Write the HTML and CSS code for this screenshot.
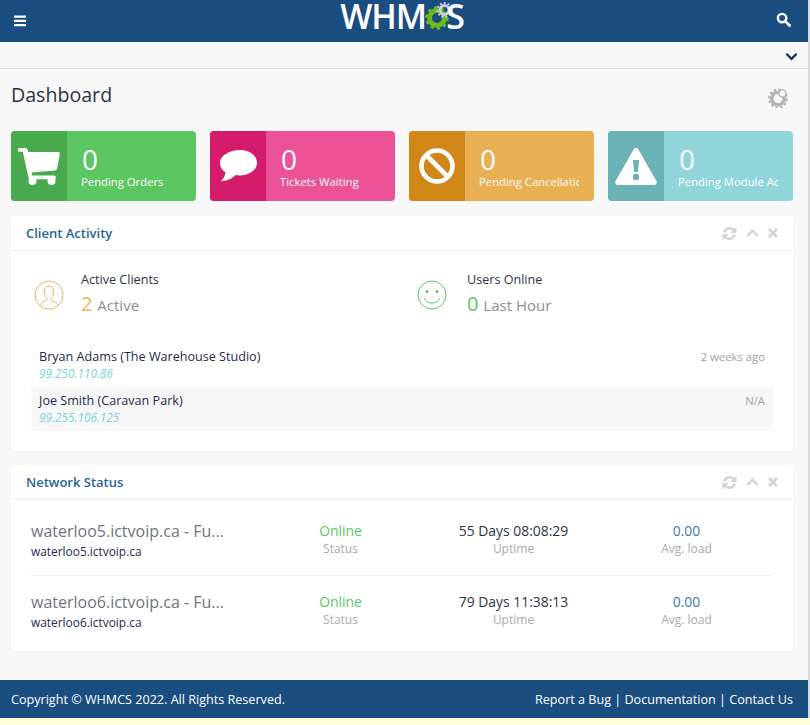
FILE: index.html
```html
<!DOCTYPE html>
<html lang="en">
<head>
    <meta charset="UTF-8">
    <title>Dashboard</title>
    <link rel="stylesheet" href="styles.css">
</head>
<body>
    <div class="page">
        <header class="topbar">
            <svg class="icon-menu" viewBox="0 0 14 12"><path d="M0 0h13v2.4H0zM0 4.6h13V7H0zM0 9.2h13v2.4H0z" fill="#fff"/></svg>
            <div class="logo">
                <span class="logo-text">WHM</span>
                <svg class="logo-gears" viewBox="0 0 32 30">
                    <g fill="none" stroke="#6cb81e">
                        <circle cx="12" cy="17" r="7.5" stroke-width="5"/>
                        <circle cx="12" cy="17" r="10.5" stroke-width="2.6" stroke-dasharray="3.2 3.4"/>
                    </g>
                    <g fill="none" stroke="#c9cfd4">
                        <circle cx="19.5" cy="9" r="4.5" stroke-width="3"/>
                        <circle cx="19.5" cy="9" r="7" stroke-width="1.8" stroke-dasharray="2 2"/>
                    </g>
                </svg>
                <span class="logo-text logo-s">S</span>
            </div>
            <svg class="icon-search" viewBox="0 0 16 16"><circle cx="6.5" cy="6.5" r="4.5" fill="none" stroke="#fff" stroke-width="2.6"/><path d="M10 10l4.5 4.5" stroke="#fff" stroke-width="3" stroke-linecap="round"/></svg>
        </header>

        <div class="subbar">
            <svg class="icon-down" viewBox="0 0 14 9"><path d="M1.500 1.500L7 7l5.500-5.500" fill="none" stroke="#1c2a5a" stroke-width="2.400"/></svg>
        </div>

        <main class="content">
            <div class="title-row">
                <h1>Dashboard</h1>
                <svg class="icon-cog" viewBox="0 0 20 20">
                    <circle cx="10" cy="10.5" r="6.3" fill="none" stroke="#b5b5b5" stroke-width="3.6"/>
                    <circle cx="10" cy="10.5" r="9" fill="none" stroke="#b5b5b5" stroke-width="2" stroke-dasharray="2.6 2.1"/>
                    <circle cx="14.5" cy="5.5" r="3" fill="#f8f8f8"/>
                    <circle cx="14.5" cy="5.5" r="3.6" fill="none" stroke="#b5b5b5" stroke-width="1.4"/>
                </svg>
            </div>

            <div class="stats">
                <a class="stat stat-green">
                    <span class="stat-icon">
                        <svg class="glyph-cart" viewBox="0 0 42 37"><path d="M1.500 0h6c1 0 1.700.7 2 1.600L10.300 4H40c1.200 0 2 1 1.800 2.200l-2.700 14.500c-.2 1-1 1.600-2 1.700L13.500 24.500l.6 3H36c1.200 0 2 .9 2 1.900s-.8 1.900-2 1.900H12.500c-1 0-1.700-.6-2-1.500L4.800 3.800H1.500C.6 3.800 0 3 0 1.900S.6 0 1.500 0z" fill="#fff"/><circle cx="14.500" cy="33" r="4" fill="#fff"/><circle cx="33.500" cy="33" r="4" fill="#fff"/></svg>
                    </span>
                    <span class="stat-body"><span class="stat-num">0</span><span class="stat-label">Pending Orders</span></span>
                </a>
                <a class="stat stat-pink">
                    <span class="stat-icon">
                        <svg class="glyph-chat" viewBox="0 0 37 32"><path d="M20 0c9.400 0 17 5.500 17 12.700S29.400 25.500 20 25.500c-1.500 0-3-.1-4.400-.4C12.500 28.500 7.500 31 .5 31.500 3.500 29 5.200 25.800 5.500 22.300 1.800 20 0 16.600 0 12.700 0 5.500 10.600 0 20 0z" fill="#fff"/></svg>
                    </span>
                    <span class="stat-body"><span class="stat-num">0</span><span class="stat-label">Tickets Waiting</span></span>
                </a>
                <a class="stat stat-orange">
                    <span class="stat-icon">
                        <svg class="glyph-ban" viewBox="0 0 36 36"><circle cx="18" cy="18" r="15.500" fill="none" stroke="#fff" stroke-width="4.600"/><path d="M7 7l22 22" stroke="#fff" stroke-width="4.600"/></svg>
                    </span>
                    <span class="stat-body"><span class="stat-num">0</span><span class="stat-label">Pending Cancellations</span></span>
                </a>
                <a class="stat stat-teal">
                    <span class="stat-icon">
                        <svg class="glyph-warn" viewBox="0 0 42 37"><path d="M21 0c1 0 1.900.5 2.400 1.400l18 31.500c1 1.800-.2 4.100-2.400 4.100H3c-2.200 0-3.400-2.300-2.400-4.100l18-31.500C19.100.5 20 0 21 0z" fill="#fff"/><path d="M18 12h6l-1 12h-4z" fill="#6ab2b6"/><circle cx="21" cy="29" r="3.200" fill="#6ab2b6"/></svg>
                    </span>
                    <span class="stat-body"><span class="stat-num">0</span><span class="stat-label">Pending Module Actions</span></span>
                </a>
            </div>

            <section class="panel panel-clients">
                <div class="panel-head">
                    <h3>Client Activity</h3>
                    <div class="panel-tools">
                        <svg class="tool-refresh" viewBox="1 1 14 14"><path d="M2 7C2.500 4 5 2 8 2c1.800 0 3.300.7 4.400 1.900L14.500 2v5.500H9l2-2C10.300 4.700 9.200 4.300 8 4.300 6.300 4.300 5 5.300 4.500 7zM14 9c-.5 3-3 5-6 5-1.800 0-3.300-.7-4.400-1.900L1.500 14V8.500H7l-2 2c.7.8 1.800 1.200 3 1.200 1.700 0 3-1 3.500-2.700z" fill="#d4d4d4"/></svg>
                        <svg class="tool-up" viewBox="0 1 14 9"><path d="M1.500 8L7 2.500 12.500 8" fill="none" stroke="#d4d4d4" stroke-width="2.600"/></svg>
                        <svg class="tool-close" viewBox="0.500 0.500 10 10"><path d="M1.500 1.500l8 8M9.500 1.500l-8 8" fill="none" stroke="#d4d4d4" stroke-width="2.800"/></svg>
                    </div>
                </div>
                <div class="panel-body">
                    <div class="summary">
                        <div class="summary-item">
                            <svg class="summary-icon" viewBox="0 0 30 30"><g fill="none" stroke="#eeb35f" stroke-width="1"><circle cx="15" cy="15" r="14"/><path d="M6 25.500c.5-3 3.500-3.700 6.500-5 .8-.4 .8-2 .2-2.800-1.800-2-2.500-4-2.500-6.700 0-3 2-5 4.800-5s4.800 2 4.800 5c0 2.700-.7 4.700-2.500 6.700-.6.800-.6 2.400.2 2.800 3 1.300 6 2 6.500 5"/></g></svg>
                            <div>
                                <div class="summary-title">Active Clients</div>
                                <div class="summary-value"><span class="num-orange">2</span> Active</div>
                            </div>
                        </div>
                        <div class="summary-item summary-online">
                            <svg class="summary-icon" viewBox="0 0 30 30"><g fill="none" stroke="#5cc663" stroke-width="1"><circle cx="15" cy="15" r="14"/><path d="M7 18c1.500 3.500 4.500 5 8 5s6.500-1.500 8-5"/></g><circle cx="10" cy="11.500" r="1.500" fill="#5cc663"/><circle cx="20" cy="11.500" r="1.500" fill="#5cc663"/></svg>
                            <div>
                                <div class="summary-title">Users Online</div>
                                <div class="summary-value"><span class="num-green">0</span> Last Hour</div>
                            </div>
                        </div>
                    </div>
                    <div class="client-list">
                        <div class="client">
                            <div>
                                <div class="client-name">Bryan Adams (The Warehouse Studio)</div>
                                <div class="client-ip">99.250.110.86</div>
                            </div>
                            <div class="client-when">2 weeks ago</div>
                        </div>
                        <div class="client client-alt">
                            <div>
                                <div class="client-name">Joe Smith (Caravan Park)</div>
                                <div class="client-ip">99.255.106.125</div>
                            </div>
                            <div class="client-when">N/A</div>
                        </div>
                    </div>
                </div>
            </section>

            <section class="panel panel-network">
                <div class="panel-head">
                    <h3>Network Status</h3>
                    <div class="panel-tools">
                        <svg class="tool-refresh" viewBox="1 1 14 14"><path d="M2 7C2.500 4 5 2 8 2c1.800 0 3.300.7 4.400 1.900L14.500 2v5.500H9l2-2C10.300 4.700 9.200 4.300 8 4.300 6.300 4.300 5 5.300 4.500 7zM14 9c-.5 3-3 5-6 5-1.800 0-3.300-.7-4.400-1.900L1.500 14V8.500H7l-2 2c.7.8 1.800 1.200 3 1.200 1.700 0 3-1 3.500-2.700z" fill="#d4d4d4"/></svg>
                        <svg class="tool-up" viewBox="0 1 14 9"><path d="M1.500 8L7 2.500 12.500 8" fill="none" stroke="#d4d4d4" stroke-width="2.600"/></svg>
                        <svg class="tool-close" viewBox="0.500 0.500 10 10"><path d="M1.500 1.500l8 8M9.500 1.500l-8 8" fill="none" stroke="#d4d4d4" stroke-width="2.800"/></svg>
                    </div>
                </div>
                <div class="panel-body network">
                    <div class="server">
                        <div class="server-name">
                            <div class="server-title">waterloo5.ictvoip.ca - Fu...</div>
                            <div class="server-host">waterloo5.ictvoip.ca</div>
                        </div>
                        <div class="metric"><div class="metric-value online">Online</div><div class="metric-label">Status</div></div>
                        <div class="metric"><div class="metric-value">55 Days 08:08:29</div><div class="metric-label">Uptime</div></div>
                        <div class="metric"><div class="metric-value load">0.00</div><div class="metric-label">Avg. load</div></div>
                    </div>
                    <div class="server">
                        <div class="server-name">
                            <div class="server-title">waterloo6.ictvoip.ca - Fu...</div>
                            <div class="server-host">waterloo6.ictvoip.ca</div>
                        </div>
                        <div class="metric"><div class="metric-value online">Online</div><div class="metric-label">Status</div></div>
                        <div class="metric"><div class="metric-value">79 Days 11:38:13</div><div class="metric-label">Uptime</div></div>
                        <div class="metric"><div class="metric-value load">0.00</div><div class="metric-label">Avg. load</div></div>
                    </div>
                </div>
            </section>
        </main>

        <footer class="footer">
            <span>Copyright &copy; WHMCS 2022. All Rights Reserved.</span>
            <span class="footer-links">Report a Bug | Documentation | Contact Us</span>
        </footer>
    </div>
</body>
</html>
```

FILE: styles.css
```css
html, body {
    margin: 0;
    padding: 0;
    height: 100%;
    overflow: hidden;
}
body {
    font-family: 'Open Sans', sans-serif;
    font-size: 13px;
    background-color: #ffffd8;
    color: #1f2a4d;
}
h1, h3 {
    margin: 0;
    font-weight: 400;
}
.page {
    width: 808px;
    background-color: #f8f8f8;
    border-right: 2px solid #d8d8d8;
}

/* top bar */
.topbar {
    height: 42px;
    background-color: #1a4d80;
    display: flex;
    align-items: center;
    justify-content: space-between;
    padding: 0 17px 0 14px;
    box-sizing: border-box;
}
.icon-menu {
    width: 13px;
    height: 12px;
}
.icon-search {
    width: 15px;
    height: 15px;
    margin-top: -3px;
}
.logo {
    display: flex;
    align-items: center;
    height: 30px;
    margin-left: 1px;
    margin-bottom: 10px;
}
.logo-text {
    font-family: 'Open Sans', sans-serif;
    font-weight: 600;
    font-size: 34px;
    line-height: 30px;
    letter-spacing: -1px;
    color: #fff;
}
.logo-gears {
    width: 32px;
    height: 30px;
    margin: 0 -11px 0 -1px;
}
.subbar {
    height: 26px;
    background-color: #f6f6f6;
    border-bottom: 1px solid #dcdcdc;
    display: flex;
    align-items: center;
    justify-content: flex-end;
    padding-right: 10px;
}
.icon-down {
    width: 13px;
    height: 9px;
    margin-top: 2px;
}

/* main */
.content {
    padding: 0 15px 29px 11px;
}
.title-row {
    display: flex;
    justify-content: space-between;
    align-items: center;
    height: 61px;
}
h1 {
    font-size: 19.600px;
    color: #2c3446;
    margin-top: -10px;
}
.icon-cog {
    width: 20px;
    height: 20px;
    margin-right: 5px;
    margin-top: -4px;
}

/* stat boxes */
.stats {
    display: grid;
    grid-template-columns: repeat(4, 185px);
    column-gap: 14px;
    margin-top: 1px;
}
.stat {
    height: 70px;
    border-radius: 4px;
    display: flex;
    overflow: hidden;
    color: #fff;
}
.stat-icon {
    width: 56px;
    flex: none;
    display: flex;
    align-items: center;
    justify-content: center;
}
.stat-body {
    min-width: 0;
    flex: 1;
    margin: 0 15px 0 14px;
    padding-top: 14px;
    overflow: hidden;
    white-space: nowrap;
    display: flex;
    flex-direction: column;
}
.stat-num {
    font-size: 28px;
    line-height: 28px;
    margin-left: 1px;
}
.stat-label {
    font-size: 11.300px;
    line-height: 16px;
    margin-top: 1px;
}
.stat-green { background-color: #5cc663; }
.stat-green .stat-icon { background-color: #4aaa50; }
.stat-pink { background-color: #ec5396; }
.stat-pink .stat-icon { background-color: #d41c6b; }
.stat-orange { background-color: #e9af53; }
.stat-orange .stat-icon { background-color: #d18618; }
.stat-teal { background-color: #8fd5da; }
.stat-teal .stat-icon { background-color: #6ab2b6; }
.glyph-cart { width: 42px; height: 37px; }
.glyph-chat { width: 37px; height: 32px; }
.glyph-ban { width: 36px; height: 36px; }
.glyph-warn { width: 42px; height: 37px; }

/* panels */
.panel {
    background-color: #fff;
    border-radius: 4px;
    box-shadow: 0 1px 2px rgba(0, 0, 0, 0.04);
    margin-top: 15px;
}
.panel-network {
    margin-top: 14px;
}
.panel-head {
    height: 34px;
    border-bottom: 1px solid #eeeeee;
    display: flex;
    align-items: center;
    justify-content: space-between;
    padding: 0 15px;
}
.panel-head h3 {
    font-size: 13px;
    font-weight: 600;
    color: #2a6496;
}
.panel-tools {
    display: flex;
    align-items: center;
    gap: 9px;
}
.tool-refresh { width: 15px; height: 15px; }
.tool-up { width: 13px; height: 9px; }
.tool-close { width: 10px; height: 10px; }
.panel-body {
    padding: 0 20px 20px;
}

/* client activity */
.summary {
    display: flex;
    padding-top: 19px;
    padding-bottom: 1px;
}
.summary-item {
    flex: none;
    width: 380px;
    margin-left: 3px;
    display: flex;
    gap: 17px;
    align-items: center;
    height: 48px;
}
.summary-online {
    gap: 20px;
}
.summary-icon {
    width: 30px;
    height: 30px;
    flex: none;
    margin-top: 2px;
}
.summary-title {
    font-size: 12.600px;
    line-height: 18px;
    color: #2c3446;
}
.summary-value {
    font-size: 15px;
    line-height: 26px;
    margin-top: 2px;
    color: #8d8f95;
}
.num-orange, .num-green {
    font-size: 20px;
    margin-right: 1px;
}
.num-orange { color: #eeb35f; }
.num-green { color: #5cc663; }
.client-list {
    margin-top: 24px;
}
.client {
    height: 44px;
    display: flex;
    justify-content: space-between;
    padding: 0 8px;
    box-sizing: border-box;
}
.client-alt {
    background-color: #f7f7f7;
}
.client-name {
    font-size: 12.600px;
    line-height: 17px;
    padding-top: 5px;
}
.client-ip {
    font-size: 11.800px;
    font-style: italic;
    line-height: 16px;
    color: #78d2d8;
}
.client-when {
    font-size: 11.300px;
    line-height: 18px;
    padding-top: 5px;
    color: #a0a0a5;
}

/* network status */
.network {
    padding: 5px 20px 4px;
}
.server {
    height: 71px;
    box-sizing: border-box;
    display: flex;
    padding-top: 15px;
    border-bottom: 1px solid #f1f1f1;
}
.server:last-child {
    border-bottom: none;
}
.server-name {
    width: 223px;
}
.server-title {
    font-size: 16px;
    line-height: 22px;
    color: #70747c;
}
.server-host {
    font-size: 11.900px;
    line-height: 17px;
    margin-top: 1px;
}
.metric {
    width: 173px;
    padding-top: 1px;
    text-align: center;
}
.metric-value {
    font-size: 13.900px;
    line-height: 20px;
    color: #2c3446;
}
.metric-value.online { color: #5cc663; }
.metric-value.load { color: #337ab7; }
.metric-label {
    font-size: 12px;
    line-height: 16px;
    color: #a9abb0;
}

/* footer */
.footer {
    height: 38px;
    background-color: #1a4d80;
    color: #fff;
    display: flex;
    align-items: center;
    justify-content: space-between;
    padding: 0 15px 0 11px;
    font-size: 12.600px;
}
```
